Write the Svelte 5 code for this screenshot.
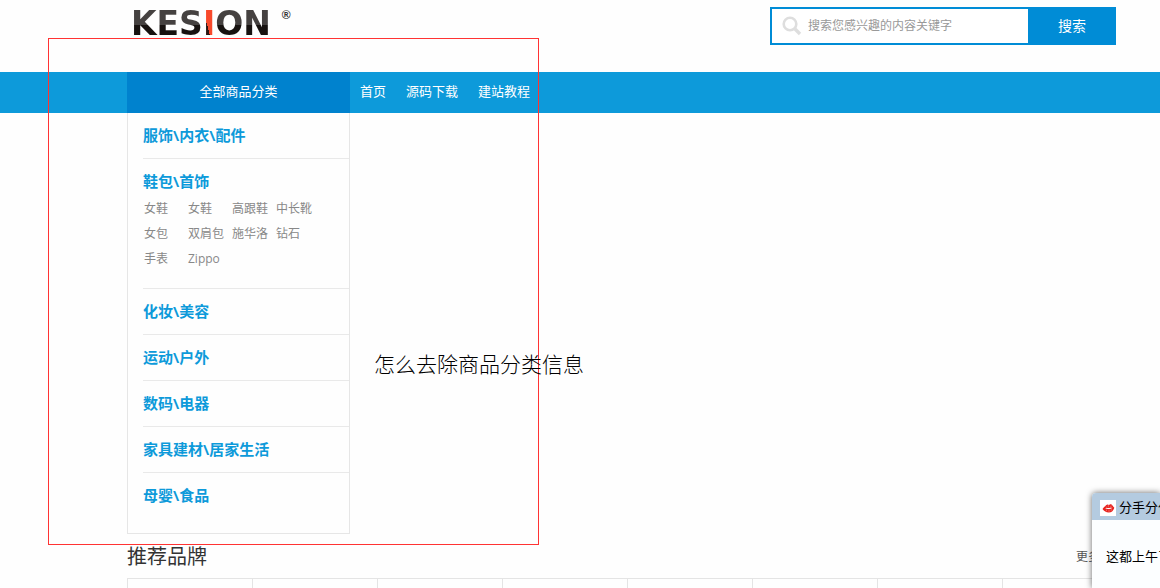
<script>
  const nav = ['首页', '源码下载', '建站教程'];
  const categories = [
    { name: '服饰\\内衣\\配件', items: [] },
    {
      name: '鞋包\\首饰',
      items: ['女鞋', '女鞋', '高跟鞋', '中长靴', '女包', '双肩包', '施华洛', '钻石', '手表', 'Zippo']
    },
    { name: '化妆\\美容', items: [] },
    { name: '运动\\户外', items: [] },
    { name: '数码\\电器', items: [] },
    { name: '家具建材\\居家生活', items: [] },
    { name: '母婴\\食品', items: [] }
  ];
  const brands = [1, 2, 3, 4, 5, 6, 7, 8];
</script>

<div class="page">
  <header class="top wrap">
    <a class="logo" href="#home"><span>KES</span><span class="i">I</span><span>ON</span><sup>®</sup></a>
    <form class="search" onsubmit={(e) => e.preventDefault()}>
      <svg viewBox="0 0 20 20" aria-hidden="true">
        <circle cx="8" cy="8" r="6.3" fill="none" stroke="#dedede" stroke-width="2.6" />
        <path d="M12.8 12.8 18 18" stroke="#dedede" stroke-width="3.4" />
      </svg>
      <input type="text" aria-label="搜索" placeholder="搜索您感兴趣的内容关键字" />
      <button type="submit">搜索</button>
    </form>
  </header>

  <div class="bar">
    <nav class="wrap">
      <h2>全部商品分类</h2>
      {#each nav as item}
        <a href="#nav">{item}</a>
      {/each}
    </nav>
  </div>

  <main class="wrap">
    <aside>
      {#each categories as cat}
        <section class:open={cat.items.length > 0}>
          <h3><a href="#category">{cat.name}</a></h3>
          {#if cat.items.length}
            <ul>
              {#each cat.items as item}
                <li><a href="#item">{item}</a></li>
              {/each}
            </ul>
          {/if}
        </section>
      {/each}
    </aside>
    <div class="heading">
      <h2>推荐品牌</h2>
      <a href="#more">更多</a>
    </div>
    <div class="brands">
      {#each brands as b (b)}
        <div></div>
      {/each}
    </div>
  </main>

  <div class="marker"></div>
  <p class="note">怎么去除商品分类信息</p>

  <div class="popup">
    <div class="popup-head">
      <svg viewBox="0 0 16 16" aria-hidden="true">
        <rect width="16" height="16" fill="#fff" />
        <path d="M2.500 9C4 7 6 4.800 7.600 4.400c.7 0 .9.500 1.400.5s1.200-.8 2-.6c1.300.4 2 2.400 3.300 3.500C13.200 11 11.500 12.600 8.800 12.600 6 12.600 4.200 11.200 2.500 9Z" fill="#e8231e" />
        <path d="M5 9c1.500-1 2.800-1.100 4-.9 1.300-.5 2.400-.6 3.600-.3-1.300.8-2.400 1.200-3.600 1.200C7.500 9.100 6.200 9.200 5 9Z" fill="#fff" />
        <path d="m6 6.500.8 1.300M8.300 5v2.300M11.300 5.500l-.8 1.800M6.500 9.700v1.500M9 9.700v2.200M11.500 9.300l-.5 1.600" stroke="#f6a5a0" stroke-width=".5" />
      </svg>
      <span>分手分什么</span>
    </div>
    <p>这都上午了</p>
  </div>
</div>

<style>
  :global(body) {
    margin: 0;
    background: #fefefe;
  }
  .page {
    position: relative;
    display: flex;
    flex-direction: column;
    min-height: 100vh;
    overflow: hidden;
    font-family: 'Noto Sans CJK SC', sans-serif;
    font-size: 13px;
    color: #333;
  }
  a {
    color: inherit;
    text-decoration: none;
  }
  h2, h3, p, ul {
    margin: 0;
    padding: 0;
    font-weight: 400;
  }
  ul {
    list-style: none;
  }
  .wrap {
    margin: 0 33px 0 127px;
  }
  .top {
    display: flex;
    justify-content: space-between;
    align-items: flex-start;
    height: 65px;
    padding: 7px 11px 0 4px;
  }
  .logo {
    display: flex;
    font: 700 33px/34px 'DejaVu Sans', sans-serif;
  }
  .logo span {
    color: transparent;
    background: linear-gradient(#454140 0 52%, #171210 52%);
    -webkit-background-clip: text;
    background-clip: text;
  }
  .logo .i {
    background: linear-gradient(75deg, #2a1512 0 40%, #f8492b 40%);
    -webkit-background-clip: text;
    background-clip: text;
  }
  .logo sup {
    margin-left: 11px;
    font: 700 12px/16px 'Liberation Sans', sans-serif;
    color: #333;
  }
  .search {
    display: flex;
    align-items: center;
    box-sizing: border-box;
    width: 346px;
    height: 38px;
    border: 2px solid #008cd6;
    background: #fff;
  }
  .search svg {
    flex: none;
    width: 20px;
    height: 20px;
    margin: 0 6px 0 10px;
  }
  .search input {
    flex: 1;
    min-width: 0;
    padding: 0 0 2px;
    border: 0;
    outline: 0;
    background: none;
    font: 12px/20px 'Noto Sans CJK SC', sans-serif;
  }
  .search input::placeholder {
    color: #999;
  }
  .search button {
    align-self: stretch;
    width: 88px;
    margin-right: -2px;
    padding: 0 0 2px;
    border: 0;
    background: #008cd6;
    color: #fff;
    font: 14px/20px 'Noto Sans CJK SC', sans-serif;
  }
  .bar {
    background: #0d9ada;
  }
  nav {
    display: flex;
    line-height: 38px;
    color: #fff;
  }
  nav h2 {
    width: 223px;
    padding-bottom: 3px;
    background: #0082ce;
    font-size: 13px;
    text-align: center;
  }
  nav a {
    padding: 0 10px;
  }
  main {
    flex: 1;
    display: flex;
    flex-direction: column;
  }
  aside {
    box-sizing: border-box;
    width: 223px;
    padding: 0 0 14px 15px;
    border: 1px solid #e6e6e6;
    border-top: 0;
  }
  section {
    padding: 7px 0 8px;
    border-bottom: 1px solid #e9e9e9;
  }
  section.open {
    padding-bottom: 17px;
  }
  section:last-child {
    border-bottom-color: transparent;
  }
  h3 {
    height: 30px;
    font: 700 15px/30px 'Open Sans', 'Noto Sans CJK SC', sans-serif;
    color: #0d9ada;
  }
  aside ul {
    display: grid;
    grid-template-columns: repeat(4, 44px);
    grid-auto-rows: 25px;
    padding-left: 1px;
    font-family: 'Open Sans', 'Noto Sans CJK SC', sans-serif;
    font-size: 12px;
    line-height: 25px;
    color: #888;
    white-space: nowrap;
  }
  .heading {
    display: flex;
    justify-content: space-between;
    line-height: 44px;
  }
  .heading h2 {
    font-size: 20px;
  }
  .heading a {
    padding-right: 27px;
    font-size: 12px;
    color: #555;
  }
  .brands {
    flex: 1;
    display: grid;
    grid-template-columns: repeat(8, 1fr);
    border-top: 1px solid #e4e4e4;
  }
  .brands div {
    border-left: 1px solid #e4e4e4;
  }
  .marker {
    position: absolute;
    left: 48px;
    top: 38px;
    width: 489px;
    height: 505px;
    border: 1px solid #ff3333;
  }
  .note {
    position: absolute;
    left: 374px;
    top: 348px;
    font-size: 21px;
    font-weight: 300;
    line-height: 30px;
    color: #000;
  }
  .popup {
    position: absolute;
    right: 0;
    bottom: 0;
    width: 68px;
    height: 95px;
    overflow: hidden;
    border-radius: 4px 0 0 0;
    background: #fcfeff;
    box-shadow: 0 0 6px rgba(0, 0, 0, 0.6);
    color: #000;
    white-space: nowrap;
  }
  .popup-head {
    display: flex;
    align-items: center;
    gap: 3px;
    padding-left: 8px;
    background: #b4cbe0;
    line-height: 27px;
  }
  .popup-head svg {
    flex: none;
    width: 16px;
    height: 16px;
    margin-top: 2px;
  }
  .popup p {
    padding: 23px 0 0 14px;
    line-height: 26px;
  }
</style>
